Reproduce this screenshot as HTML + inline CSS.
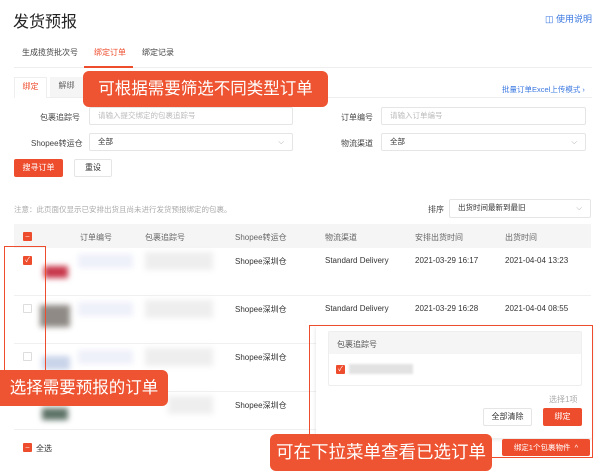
<!DOCTYPE html>
<html><head><meta charset="utf-8"><style>
*{margin:0;padding:0;box-sizing:border-box}
body{width:602px;height:472px;overflow:hidden;background:#fff;font-family:"Liberation Sans","Noto Sans CJK SC",sans-serif;font-size:8px;color:#333;position:relative}
.a{position:absolute;white-space:nowrap}
.inp{position:absolute;border:1px solid #e5e5e5;border-radius:2px;height:18px;line-height:16px;padding-left:8px;color:#bbb;font-size:7.5px}
.chev{position:absolute;right:8px;top:0;color:#aaa}
.cb{position:absolute;width:9px;height:9px;border:1px solid #ddd;border-radius:1px;background:#fff}
.cbr{background:#ee4d2d;border-color:#ee4d2d;color:#fff;font-size:7px;line-height:8px;text-align:center}
.blur{position:absolute;filter:blur(3px)}
.call{position:absolute;background:#ee5431;color:#fff;border-radius:6px;font-size:16.5px;text-align:center;white-space:nowrap}
</style></head><body>
<div class="a" style="left:13px;top:8px;font-size:16px;color:#222">发货预报</div>
<div class="a" style="left:545px;top:12px;font-size:9px;color:#3a77e0">◫ 使用说明</div>

<div class="a" style="left:22px;top:47px;font-size:8px;color:#444">生成揽货批次号</div>
<div class="a" style="left:94px;top:47px;font-size:8px;color:#ee4d2d">绑定订单</div>
<div class="a" style="left:142px;top:47px;font-size:8px;color:#444">绑定记录</div>
<div class="a" style="left:14px;top:67px;width:578px;height:1px;background:#eee"></div>
<div class="a" style="left:84px;top:66px;width:49px;height:2px;background:#ee4d2d"></div>

<div class="a" style="left:14px;top:97px;width:578px;height:1px;background:#eee"></div>
<div class="a" style="left:14px;top:77px;width:33px;height:21px;border:1px solid #eee;border-bottom:none;background:#fff;color:#ee4d2d;line-height:18px;text-align:center">绑定</div>
<div class="a" style="left:50px;top:77px;width:33px;height:20px;background:#f5f5f5;color:#666;line-height:18px;text-align:center">解绑</div>
<div class="a" style="left:502px;top:84px;font-size:7.5px;color:#3a77e0">批量订单Excel上传模式 ›</div>

<div class="a" style="left:40px;top:112px;color:#444">包裹追踪号</div>
<div class="inp" style="left:89px;top:107px;width:204px">请输入提交绑定的包裹追踪号</div>
<div class="a" style="left:341px;top:112px;color:#444">订单编号</div>
<div class="inp" style="left:381px;top:107px;width:205px">请输入订单编号</div>
<div class="a" style="left:31px;top:138px;color:#444">Shopee转运仓</div>
<div class="inp" style="left:89px;top:133px;width:204px;color:#333">全部<span class="chev">⌵</span></div>
<div class="a" style="left:341px;top:138px;color:#444">物流渠道</div>
<div class="inp" style="left:381px;top:133px;width:205px;color:#333">全部<span class="chev">⌵</span></div>

<div class="a" style="left:14px;top:159px;width:49px;height:18px;background:#ee4d2d;color:#fff;border-radius:2px;line-height:18px;text-align:center">搜寻订单</div>
<div class="a" style="left:74px;top:159px;width:38px;height:18px;border:1px solid #e5e5e5;border-radius:2px;line-height:16px;text-align:center">重设</div>

<div class="a" style="left:14px;top:204px;color:#aaa;font-size:7.5px">注意：此页面仅显示已安排出货且尚未进行发货预报绑定的包裹。</div>
<div class="a" style="left:428px;top:204px;color:#444">排序</div>
<div class="inp" style="left:449px;top:199px;width:142px;height:19px;color:#333">出货时间最新到最旧<span class="chev">⌵</span></div>

<div class="a" style="left:14px;top:224px;width:577px;height:24px;background:#f5f5f5"></div>
<div class="cb cbr" style="left:23px;top:232px;">–</div>
<div class="a" style="left:80px;top:232px;color:#666">订单编号</div>
<div class="a" style="left:145px;top:232px;color:#666">包裹追踪号</div>
<div class="a" style="left:235px;top:232px;color:#666">Shopee转运仓</div>
<div class="a" style="left:325px;top:232px;color:#666">物流渠道</div>
<div class="a" style="left:415px;top:232px;color:#666">安排出货时间</div>
<div class="a" style="left:505px;top:232px;color:#666">出货时间</div>

<div class="a" style="left:14px;top:295px;width:577px;height:1px;background:#f0f0f0"></div>
<div class="a" style="left:14px;top:343px;width:577px;height:1px;background:#f0f0f0"></div>
<div class="a" style="left:14px;top:391px;width:577px;height:1px;background:#f0f0f0"></div>
<div class="a" style="left:14px;top:429px;width:577px;height:1px;background:#f0f0f0"></div>

<div class="cb cbr" style="left:23px;top:256px">✓</div>
<div class="blur" style="left:44px;top:266px;width:24px;height:12px;background:#c8364a"></div>
<div class="blur" style="left:78px;top:254px;width:55px;height:14px;background:#eef0fa"></div>
<div class="blur" style="left:145px;top:252px;width:68px;height:18px;background:#eee"></div>
<div class="a" style="left:235px;top:256px">Shopee深圳仓</div>
<div class="a" style="left:325px;top:256px">Standard Delivery</div>
<div class="a" style="left:415px;top:256px">2021-03-29 16:17</div>
<div class="a" style="left:505px;top:256px">2021-04-04 13:23</div>

<div class="cb" style="left:23px;top:304px"></div>
<div class="blur" style="left:40px;top:305px;width:30px;height:22px;background:#8f8a85"></div>
<div class="blur" style="left:78px;top:302px;width:55px;height:14px;background:#eef0fa"></div>
<div class="blur" style="left:145px;top:300px;width:68px;height:18px;background:#eee"></div>
<div class="a" style="left:235px;top:304px">Shopee深圳仓</div>
<div class="a" style="left:325px;top:304px">Standard Delivery</div>
<div class="a" style="left:415px;top:304px">2021-03-29 16:28</div>
<div class="a" style="left:505px;top:304px">2021-04-04 08:55</div>

<div class="cb" style="left:23px;top:352px"></div>
<div class="blur" style="left:42px;top:356px;width:28px;height:14px;background:#c9d4ea"></div>
<div class="blur" style="left:78px;top:350px;width:55px;height:14px;background:#eef0fa"></div>
<div class="blur" style="left:145px;top:348px;width:68px;height:18px;background:#eee"></div>
<div class="a" style="left:235px;top:352px">Shopee深圳仓</div>
<div class="blur" style="left:42px;top:408px;width:26px;height:12px;background:#5d7267"></div>
<div class="blur" style="left:168px;top:396px;width:45px;height:18px;background:#eee"></div>
<div class="a" style="left:235px;top:400px">Shopee深圳仓</div>

<div class="cb cbr" style="left:23px;top:443px">–</div>
<div class="a" style="left:36px;top:443px">全选</div>

<!-- popup -->
<div class="a" style="left:316px;top:326px;width:276px;height:112px;background:#fff;box-shadow:0 1px 4px rgba(0,0,0,.12)"></div>
<div class="a" style="left:328px;top:331px;width:254px;height:55px;border:1px solid #eee;border-radius:2px"></div>
<div class="a" style="left:329px;top:332px;width:252px;height:22px;background:#f5f5f5"></div>
<div class="a" style="left:337px;top:339px;color:#555">包裹追踪号</div>
<div class="cb cbr" style="left:336px;top:365px">✓</div>
<div class="blur" style="left:349px;top:364px;width:64px;height:10px;background:#e2e2e2;filter:blur(1px)"></div>
<div class="a" style="left:549px;top:394px;color:#aaa">选择1项</div>
<div class="a" style="left:483px;top:408px;width:49px;height:18px;border:1px solid #e5e5e5;border-radius:2px;line-height:16px;text-align:center">全部清除</div>
<div class="a" style="left:543px;top:408px;width:39px;height:18px;background:#ee4d2d;color:#fff;border-radius:2px;line-height:18px;text-align:center">绑定</div>
<div class="a" style="left:502px;top:439px;width:88px;height:17px;background:#ee4d2d;color:#fff;border-radius:2px;line-height:17px;text-align:center;font-size:7.5px">绑定1个包裹物件 &nbsp;^</div>

<!-- outlines -->
<div class="a" style="left:4px;top:246px;width:42px;height:126px;border:1.5px solid #ee4d2d;border-bottom:none"></div>
<div class="a" style="left:309px;top:325px;width:284px;height:133px;border:1.5px solid #ee4d2d"></div>

<!-- callouts -->
<div class="call" style="left:83px;top:71px;width:245px;height:36px;line-height:36px">可根据需要筛选不同类型订单</div>
<div class="call" style="left:0px;top:370px;width:168px;height:36px;line-height:36px;border-radius:0 6px 6px 0">选择需要预报的订单</div>
<div class="call" style="left:270px;top:434px;width:222px;height:37px;line-height:37px;font-size:17.5px">可在下拉菜单查看已选订单</div>
</body></html>
